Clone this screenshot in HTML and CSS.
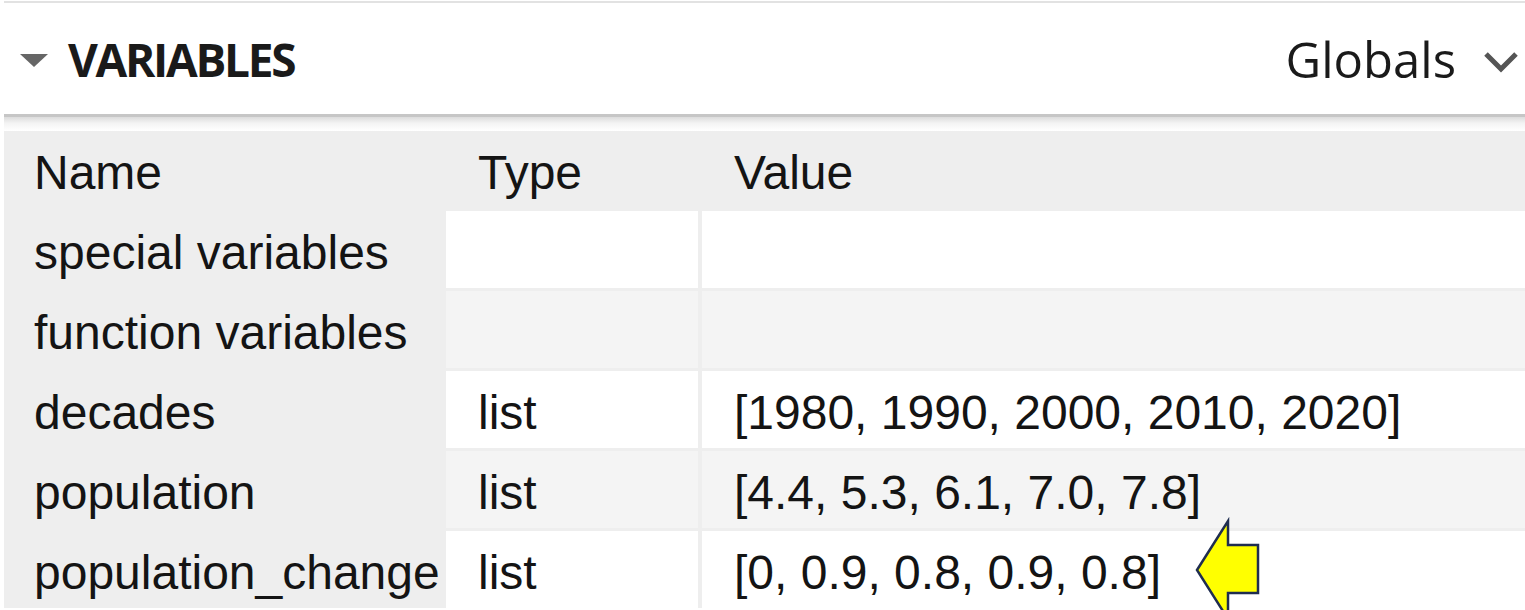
FILE: index.html
```html
<!DOCTYPE html>
<html>
<head>
<meta charset="utf-8">
<link rel="stylesheet" href="styles.css">
</head>
<body>
<div class="panel">
  <div class="topline"></div>
  <header class="head">
    <div class="title">
      <svg class="twisty" width="28" height="14" viewBox="0 0 28 14"><polygon points="0,0 28,0 14,13" fill="#666"/></svg>
      <span class="title-text">VARIABLES</span>
    </div>
    <div class="scope">
      <span class="scope-text">Globals</span>
      <svg class="chev" width="36" height="24" viewBox="0 0 36 24"><polyline points="3,4 18,19 33,4" fill="none" stroke="#555" stroke-width="5"/></svg>
    </div>
  </header>
  <div class="shadow"></div>
  <div class="grid">
    <div class="cell name">Name</div>
    <div class="cell hdr">Type</div>
    <div class="cell hdr">Value</div>

    <div class="cell name">special variables</div>
    <div class="cell w"></div>
    <div class="cell w"></div>

    <div class="cell name">function variables</div>
    <div class="cell g"></div>
    <div class="cell g"></div>

    <div class="cell name">decades</div>
    <div class="cell w">list</div>
    <div class="cell w">[1980, 1990, 2000, 2010, 2020]</div>

    <div class="cell name">population</div>
    <div class="cell g">list</div>
    <div class="cell g">[4.4, 5.3, 6.1, 7.0, 7.8]</div>

    <div class="cell name">population_change</div>
    <div class="cell w">list</div>
    <div class="cell w">[0, 0.9, 0.8, 0.9, 0.8]</div>
  </div>
  <svg class="arrow" width="70" height="110" viewBox="0 0 70 110">
    <polygon points="4,59 35,10 35,34 65,34 65,82 35,82 35,108" fill="#ffff00" stroke="#1f2d50" stroke-width="2.5" stroke-linejoin="miter"/>
  </svg>
</div>
</body>
</html>
```

FILE: styles.css
```css
html, body {
  margin: 0;
  padding: 0;
  background: #fff;
  overflow: hidden;
}
.panel {
  position: relative;
  width: 1525px;
  height: 610px;
  overflow: hidden;
  padding-left: 4px;
  box-sizing: border-box;
}
.topline {
  height: 2px;
  margin-top: 1px;
  background: #e2e2e2;
}
.head {
  height: 111px;
  display: flex;
  align-items: center;
  justify-content: space-between;
  border-bottom: 3px solid #c6c6c6;
}
.title {
  display: flex;
  align-items: center;
}
.twisty {
  margin-left: 16px;
  margin-right: 20px;
  margin-top: 4px;
}
.title-text {
  font-family: "Open Sans", "Noto Sans", sans-serif;
  font-weight: 700;
  font-size: 46px;
  color: #1a1a1a;
  letter-spacing: -2.3px;
}
.scope {
  display: flex;
  align-items: center;
}
.scope-text {
  font-family: "Open Sans", "Noto Sans", sans-serif;
  font-size: 49px;
  color: #1a1a1a;
  margin-right: 27px;
}
.chev {
  margin-right: 6px;
  margin-top: 6px;
}
.shadow {
  height: 14px;
  background: linear-gradient(to bottom, #dcdcdc 0%, #f4f4f4 45%, #ffffff 100%);
}
.grid {
  display: grid;
  grid-template-columns: 438px 252px 1fr;
  grid-auto-rows: 77px;
  column-gap: 4px;
  row-gap: 3px;
  background: #eeeeee;
}
.cell {
  font-family: "Liberation Sans", Arial, sans-serif;
  font-size: 48px;
  color: #141414;
  display: flex;
  align-items: center;
  padding-left: 28px;
  padding-top: 6px;
  white-space: nowrap;
  box-sizing: border-box;
}
.name {
  background: #eeeeee;
  padding-left: 30px;
  overflow: visible;
}
.hdr {
  background: #eeeeee;
  padding-left: 32px;
}
.w {
  background: #ffffff;
  padding-left: 32px;
}
.g {
  background: #f4f4f4;
  padding-left: 32px;
}
.arrow {
  position: absolute;
  left: 1193px;
  top: 511px;
}
```
